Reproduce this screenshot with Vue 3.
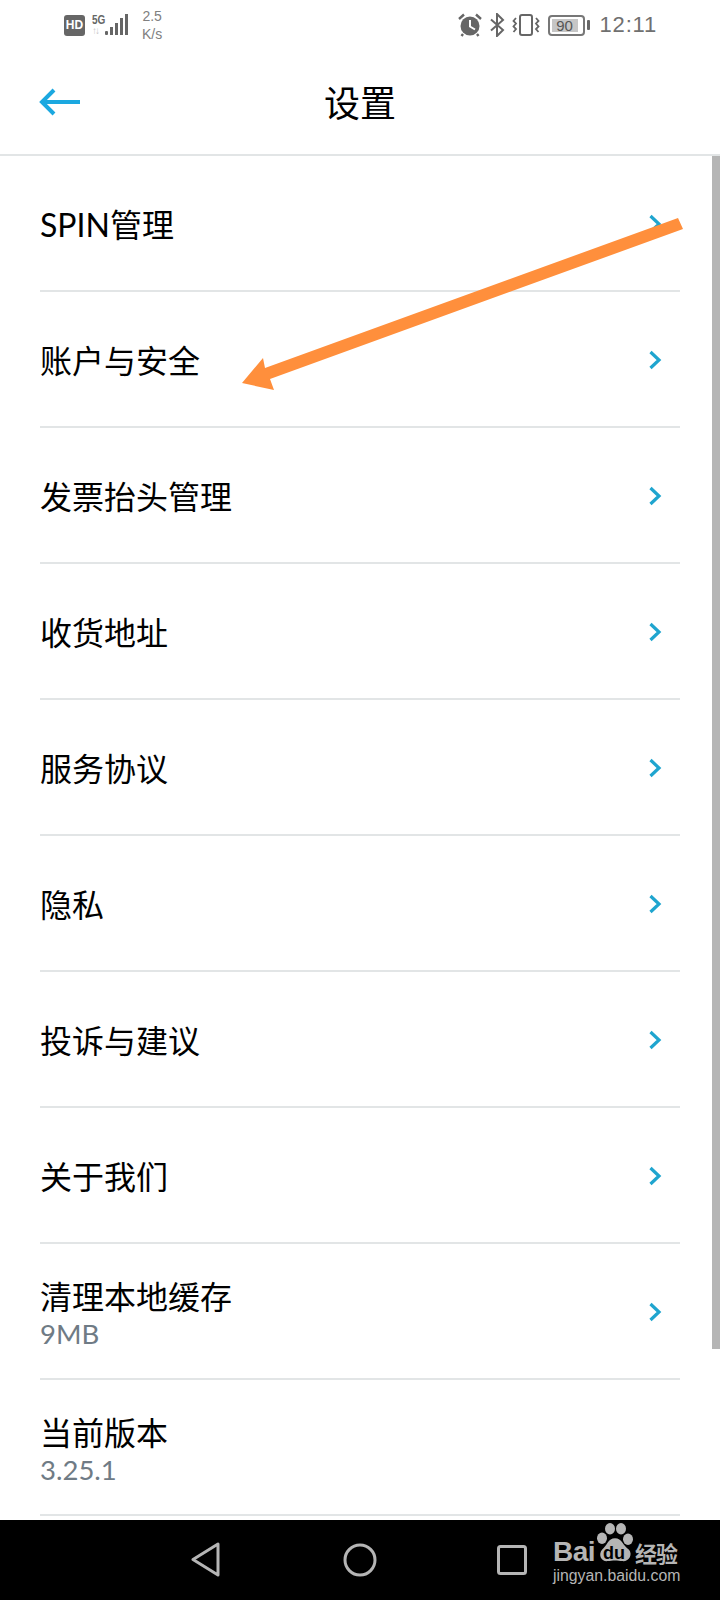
<script setup>
const rows = [
  { title: 'SPIN管理', chevron: true },
  { title: '账户与安全', chevron: true },
  { title: '发票抬头管理', chevron: true },
  { title: '收货地址', chevron: true },
  { title: '服务协议', chevron: true },
  { title: '隐私', chevron: true },
  { title: '投诉与建议', chevron: true },
  { title: '关于我们', chevron: true },
  { title: '清理本地缓存', sub: '9MB', chevron: true },
  { title: '当前版本', sub: '3.25.1', chevron: false },
]
</script>

<template>
  <div class="screen">
    <div class="status">
      <div class="status-left">
        <span class="hd">HD</span>
        <div class="net">
          <span class="net-5g">5G</span>
          <span class="net-arrows">↑↓</span>
        </div>
        <svg class="signal" width="24" height="24" viewBox="0 0 24 24">
          <rect x="0" y="18" width="3" height="4" rx="1" fill="#666" />
          <rect x="5" y="14" width="3" height="8" fill="#666" />
          <rect x="10" y="10" width="3" height="12" fill="#666" />
          <rect x="15" y="5" width="3" height="17" fill="#666" />
          <rect x="20" y="1" width="3" height="21" fill="#666" />
        </svg>
        <div class="speed"><span>2.5</span><span>K/s</span></div>
      </div>
      <div class="status-right">
        <svg width="24" height="24" viewBox="0 0 24 24">
          <path d="M1 6 L6 1.5 M23 6 L18 1.5 M5 21 L3.5 23 M19 21 L20.5 23" stroke="#666" stroke-width="2.4" fill="none" />
          <circle cx="12" cy="13" r="9.5" fill="#666" />
          <path d="M12 7 V13.5 L17 16.5" stroke="#fff" stroke-width="2" fill="none" />
        </svg>
        <svg class="bt" width="16" height="24" viewBox="0 0 16 24">
          <path d="M2 6.5 L14 17 L8 23 V1 L14 7 L2 17.5" stroke="#666" stroke-width="2" fill="none" />
        </svg>
        <svg class="vib" width="28" height="24" viewBox="0 0 28 24">
          <rect x="8" y="2" width="12" height="20" rx="2" stroke="#666" stroke-width="2" fill="none" />
          <path d="M4 5 L1.5 8 L4 10.5 L1.5 13.5 L4 16 L1.5 19 M24 5 L26.5 8 L24 10.5 L26.5 13.5 L24 16 L26.5 19" stroke="#666" stroke-width="1.8" fill="none" />
        </svg>
        <div class="battery">
          <div class="battery-body"><span class="battery-fill">90</span></div>
          <span class="battery-tip"></span>
        </div>
        <span class="clock">12:11</span>
      </div>
    </div>

    <header class="header">
      <svg class="back" width="42" height="30" viewBox="0 0 42 30">
        <path d="M41 15 H3 M15 3 L3 15 L15 27" stroke="#1ba8e0" stroke-width="4" fill="none" />
      </svg>
      <h1 class="title">设置</h1>
    </header>

    <main class="list">
      <div v-for="row in rows" :key="row.title" class="row">
        <div class="row-text">
          <span class="row-title">{{ row.title }}</span>
          <span v-if="row.sub" class="row-sub">{{ row.sub }}</span>
        </div>
        <svg v-if="row.chevron" class="chevron" width="14" height="20" viewBox="0 0 14 20">
          <path d="M2.5 2 L11 10 L2.5 18" stroke="#1fa5cf" stroke-width="3.2" fill="none" />
        </svg>
      </div>
    </main>

    <nav class="navbar">
      <svg class="nav-back" width="30" height="35" viewBox="0 0 30 35">
        <path d="M27 2 V33 L2 17.5 Z" stroke="#b5b5b5" stroke-width="3" stroke-linejoin="round" fill="none" />
      </svg>
      <svg class="nav-home" width="34" height="34" viewBox="0 0 34 34">
        <circle cx="17" cy="17" r="15" stroke="#b5b5b5" stroke-width="3" fill="none" />
      </svg>
      <svg class="nav-recent" width="30" height="30" viewBox="0 0 30 30">
        <rect x="1.5" y="1.5" width="27" height="27" rx="2" stroke="#b5b5b5" stroke-width="3" fill="none" />
      </svg>
      <div class="logo">
        <div class="logo-top">
          <span class="logo-bai">Bai</span>
          <span class="logo-paw">
            <svg width="38" height="40" viewBox="0 0 38 42" preserveAspectRatio="none">
              <ellipse cx="6" cy="16" rx="5" ry="6" fill="#b5b5b5" />
              <ellipse cx="14" cy="6" rx="5" ry="6" fill="#b5b5b5" />
              <ellipse cx="25" cy="6" rx="5" ry="6" fill="#b5b5b5" />
              <ellipse cx="32" cy="17" rx="5" ry="6" fill="#b5b5b5" />
              <path d="M19 16 C26 16 27 24 33 28 C37 33 33 41 26 40 C22 39 16 39 12 40 C5 41 2 33 6 28 C11 24 12 16 19 16 Z" fill="#b5b5b5" />
            </svg>
            <span class="logo-du">du</span>
          </span>
          <span class="logo-cn">经验</span>
        </div>
        <span class="logo-url">jingyan.baidu.com</span>
      </div>
    </nav>

    <div class="scrollbar"></div>

    <svg class="annotation" width="720" height="400" viewBox="0 0 720 400">
      <polygon points="678,218 683,229 270,379 274,390 242,383 263,358 265,368" fill="#ff8f3c" />
    </svg>
  </div>
</template>

<style>
html, body { margin: 0; padding: 0; background: #fff; }
</style>

<style scoped>
.screen {
  position: relative;
  width: 720px;
  height: 1600px;
  overflow: hidden;
  background: #fff;
  display: flex;
  flex-direction: column;
  font-family: "Lato", "Noto Sans CJK SC", sans-serif;
}
.status {
  box-sizing: border-box;
  height: 50px;
  display: flex;
  justify-content: space-between;
  align-items: center;
  padding: 0 63px 0 64px;
  color: #666;
}
.status-left, .status-right { display: flex; align-items: center; }
.hd {
  width: 21px;
  height: 21px;
  margin-top: 1px;
  border-radius: 3px;
  background: #666;
  color: #fff;
  font: 700 12px/21px "Liberation Sans", sans-serif;
  text-align: center;
}
.net {
  display: flex;
  flex-direction: column;
  margin-left: 7px;
  width: 12px;
  font-family: "Liberation Sans", sans-serif;
}
.net-5g { font-size: 10px; line-height: 12px; font-weight: 700; color: #666; transform: scaleY(1.2); }
.net-arrows { font-size: 10px; line-height: 10px; font-weight: 700; color: #c4c4c4; white-space: nowrap; letter-spacing: -2px; }
.signal { margin-left: 1px; }
.speed {
  display: flex;
  flex-direction: column;
  margin-left: 13px;
  font: 14px/18px "Liberation Sans", sans-serif;
  color: #808080;
  align-items: center;
}
.status-right svg { flex: none; }
.bt { margin-left: 7px; }
.vib { margin-left: 7px; }
.battery { display: flex; align-items: center; margin-left: 8px; }
.battery-body {
  box-sizing: border-box;
  width: 37px;
  height: 21px;
  border: 2px solid #777;
  border-radius: 4px;
  padding: 2px 5px 2px 2px;
  display: flex;
}
.battery-fill {
  flex: 1;
  background: #c6c6c6;
  color: #555;
  font: 15px/13px "Liberation Sans", sans-serif;
  text-align: center;
}
.battery-tip {
  width: 3px;
  height: 10px;
  margin-left: 2px;
  background: #666;
  border-radius: 1px;
}
.clock {
  margin-left: 10px;
  font: 22px/26px "Liberation Sans", sans-serif;
  letter-spacing: 0.8px;
  color: #707070;
}
.header {
  position: relative;
  box-sizing: border-box;
  height: 106px;
  border-bottom: 2px solid #e2e5e6;
  display: flex;
  align-items: center;
  justify-content: center;
}
.back { position: absolute; left: 39px; top: 37px; }
.title {
  margin: -3px 0 0;
  font-size: 36px;
  line-height: 48px;
  font-weight: 400;
  color: #000;
  font-family: "Noto Sans CJK SC", sans-serif;
}
.list { display: flex; flex-direction: column; padding: 0 40px; }
.row {
  box-sizing: border-box;
  height: 136px;
  border-bottom: 2px solid #e2e5e6;
  display: flex;
  align-items: center;
  justify-content: space-between;
  padding: 2px 18px 0 0;
}
.row-text { display: flex; flex-direction: column; margin-top: 1px; }
.row-title {
  font-size: 32px;
  line-height: 40px;
  color: #000;
}
.row-sub { font-size: 27.5px; line-height: 34px; color: #6f7b85; margin-bottom: -2px; }
.navbar {
  position: absolute;
  left: 0;
  right: 0;
  bottom: 0;
  height: 80px;
  background: #000;
}
.nav-back { position: absolute; left: 191px; top: 22px; }
.nav-home { position: absolute; left: 343px; top: 23px; }
.nav-recent { position: absolute; left: 497px; top: 25px; }
.logo {
  position: absolute;
  left: 553px;
  top: 3px;
  width: 128px;
  display: flex;
  flex-direction: column;
  color: #b5b5b5;
}
.logo-top { display: flex; align-items: flex-end; height: 40px; }
.logo-bai { font: 700 28px/22px "Liberation Sans", sans-serif; letter-spacing: -.5px; width: 43px; flex: none; }
.logo-paw { position: relative; width: 38px; height: 40px; flex: none; }
.logo-paw svg { display: block; }
.logo-du {
  position: absolute;
  left: 7px;
  top: 21px;
  font: 700 18px/18px "Liberation Sans", sans-serif;
  color: #000;
}
.logo-cn {
  font: 700 22px/22px "Noto Sans CJK SC", sans-serif;
  margin-left: 1px;
  white-space: nowrap;
  letter-spacing: -1px;
}
.logo-url { font: 15.8px/22px "Liberation Sans", sans-serif; margin-top: 2px; white-space: nowrap; }
.scrollbar {
  position: absolute;
  right: 0;
  top: 156px;
  width: 8px;
  height: 1193px;
  background: #b5b5b5;
}
.annotation { position: absolute; left: 0; top: 0; pointer-events: none; }
</style>
